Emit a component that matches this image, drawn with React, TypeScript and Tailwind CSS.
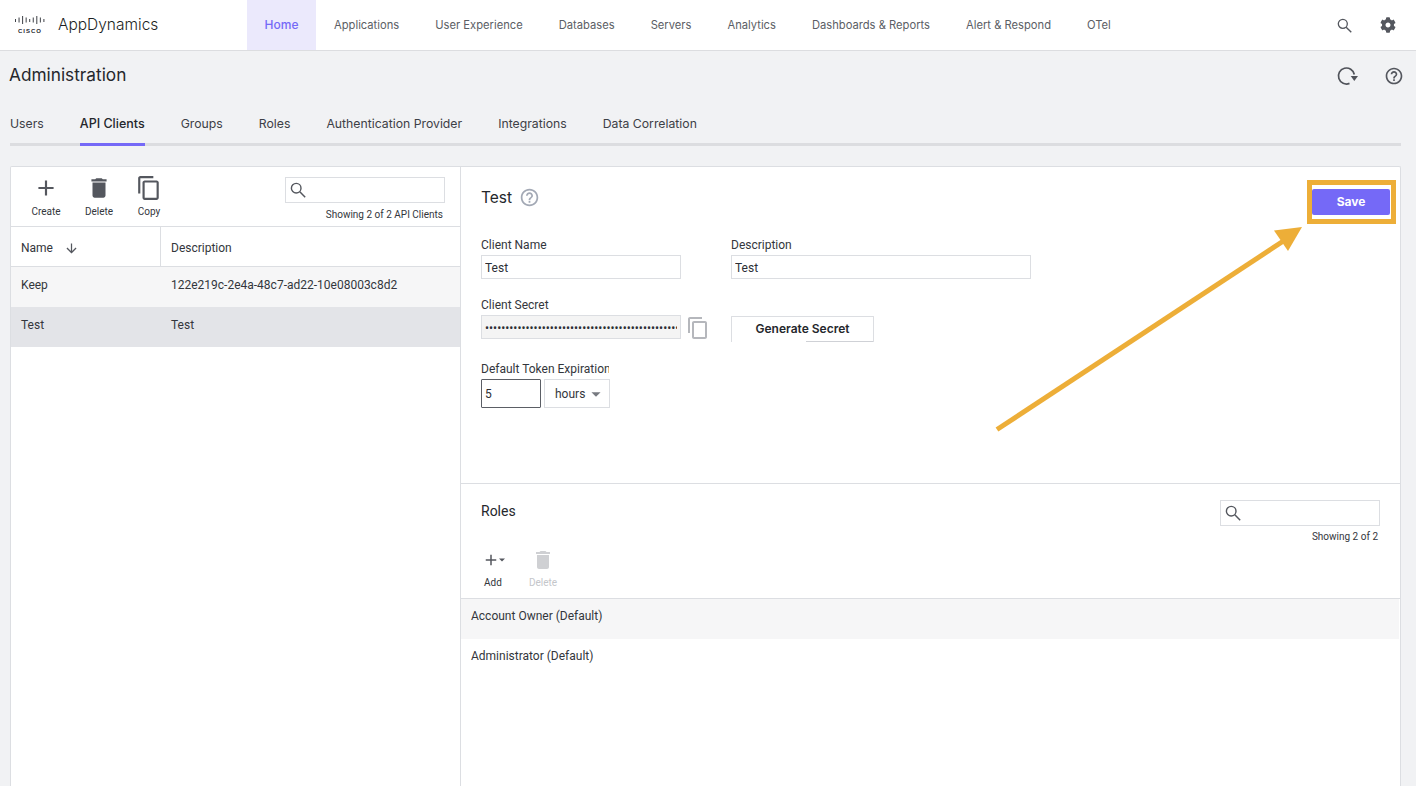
import React from "react";
import { MdAdd, MdContentCopy, MdDelete, MdArrowDownward, MdHelpOutline, MdArrowDropDown } from "react-icons/md";
import { FaCog } from "react-icons/fa";

const nav = ["Applications", "User Experience", "Databases", "Servers", "Analytics", "Dashboards & Reports", "Alert & Respond", "OTel"];
const tabs = ["Users", "API Clients", "Groups", "Roles", "Authentication Provider", "Integrations", "Data Correlation"];

function CiscoLogo() {
  const heights = [3, 5, 8, 5, 3, 5, 8, 5, 3];
  return (
    <svg width="32" height="18" viewBox="0 0 32 18" className="block">
      {heights.map((h, i) => (
        <rect key={i} x={1 + i * 3.55} y={i === 2 || i === 6 ? 0 : i % 2 ? 1.5 : 3} width="1" height={h} fill="#3f4248" />
      ))}
      <text x="16" y="16.5" textAnchor="middle" fontSize="6" fontWeight="700" letterSpacing="1" fill="#25272c" fontFamily="Liberation Sans, sans-serif">CISCO</text>
    </svg>
  );
}

function RefreshIcon() {
  return (
    <svg width="24" height="24" viewBox="0 0 24 24" fill="none" className="block">
      <path d="M13.5 19.4A8 8 0 1 1 18.3 10.5" stroke="#50535a" strokeWidth="1.7" />
      <path d="M14.7 12H22L18.3 17Z" fill="#50535a" />
    </svg>
  );
}

function Magnifier({ size = 16 }: { size?: number }) {
  return (
    <svg width={size} height={size} viewBox="0 0 16 16" fill="none" className="block">
      <circle cx="6.2" cy="6.2" r="4.8" stroke="#54575e" strokeWidth="1.4" />
      <path d="M9.8 9.8L15.2 15.2" stroke="#54575e" strokeWidth="1.5" />
    </svg>
  );
}

function ToolButton({ label, children, disabled, w, tight }: { label: string; children: React.ReactNode; disabled?: boolean; w: string; tight?: boolean }) {
  return (
    <div className={`flex flex-col items-center ${w}`}>
      <div className={`flex h-[24px] items-center justify-center ${disabled ? "text-[#cfd0d3]" : "text-[#54575e]"}`}>{children}</div>
      <span className={`${tight ? "mt-[4px]" : "mt-[5px]"} text-[10px] leading-[14px] ${disabled ? "text-[#c4c6ca]" : "text-[#33363c]"}`}>{label}</span>
    </div>
  );
}

function SearchBox({ cls }: { cls: string }) {
  return (
    <div className={`flex items-center border border-[#dcdee2] bg-white pl-[4px] ${cls}`}>
      <Magnifier />
    </div>
  );
}

const inputCls = "block h-[24px] border border-[#dcdee2] px-[3px] pt-[1px] text-[12px] text-[#2c2f35] outline-none";

export default function App() {
  return (
    <div className="relative flex h-[786px] w-[1416px] flex-col overflow-hidden bg-[#f1f2f4] font-['Inter',sans-serif] text-[#2c2f35]">
      <header className="flex h-[51px] shrink-0 items-stretch border-b border-[#dcdde0] bg-white">
        <div className="flex w-[247px] items-center pl-[14px]">
          <CiscoLogo />
          <span className="ml-[12px] text-[15.5px] font-light leading-none text-[#1d1f24]">AppDynamics</span>
        </div>
        <nav className="flex items-stretch text-[11.2px] text-[#5b5e65]">
          <div className="flex w-[69px] items-center justify-center bg-[#ebe9fc] text-[12px] font-medium text-[#7569f7]">Home</div>
          {nav.map((n) => (
            <div key={n} className="flex items-center px-[18px]">{n}</div>
          ))}
        </nav>
        <div className="ml-auto flex items-center gap-[28px] pr-[20px] text-[#54575e]">
          <Magnifier size={15} />
          <FaCog size={16} />
        </div>
      </header>

      <div className="flex h-[49px] shrink-0 items-center pl-[9px] pr-[12px]">
        <h1 className="mt-[-2px] text-[17.25px] font-normal leading-none text-[#25272c]">Administration</h1>
        <div className="ml-auto flex items-center gap-[24px] text-[#54575e]">
          <RefreshIcon />
          <MdHelpOutline size={20} />
        </div>
      </div>

      <div className="ml-[10px] mr-[15px] flex h-[46px] shrink-0 gap-[36px] border-b-[3px] border-[#dcdde0] pt-[6px] text-[12.25px] text-[#3d4046]">
        {tabs.map((t) => (
          <div key={t} className={`relative flex items-center ${t === "API Clients" ? "text-[12.5px] font-medium text-[#25272c]" : ""}`}>
            {t}
            {t === "API Clients" && <span className="absolute inset-x-0 bottom-[-3px] h-[3px] bg-[#7569f7]" />}
          </div>
        ))}
      </div>

      <main className="ml-[10px] mr-[15px] mt-[20px] flex min-h-0 flex-1 rounded-t-[2px] border border-b-0 border-[#dcdee2] bg-white font-['Roboto',sans-serif] text-[12px]">
        <section className="w-[450px] shrink-0 border-r border-[#dcdee2]">
          <div className="flex h-[60px] border-b border-[#dcdee2] pt-[9px]">
            <div className="flex gap-[15px] pl-[15px]">
              <ToolButton label="Create" w="w-[40px]"><MdAdd size={26} /></ToolButton>
              <ToolButton label="Delete" w="w-[36px]"><MdDelete size={26} /></ToolButton>
              <ToolButton label="Copy" w="w-[34px]"><MdContentCopy size={26} /></ToolButton>
            </div>
            <div className="ml-auto flex flex-col items-end pr-[15px] pt-[1px]">
              <SearchBox cls="h-[26px] w-[160px]" />
              <span className="mr-[2px] mt-[5px] text-[10px] leading-[14px] text-[#33363c]">Showing 2 of 2 API Clients</span>
            </div>
          </div>
          <div className="flex h-[40px] border-b border-[#dcdee2] pt-[3px] text-[#33363c]">
            <div className="mt-[-3px] flex w-[150px] items-center border-r border-[#dcdee2] pl-[10px] pt-[3px]">
              Name
              <MdArrowDownward size={15} className="ml-[11px] text-[#54575e]" />
            </div>
            <div className="flex items-center pl-[10px]">Description</div>
          </div>
          <div className="flex h-[40px] bg-[#f6f6f7] pt-[9px] text-[#33363c]">
            <div className="w-[150px] pl-[10px]">Keep</div>
            <div className="pl-[10px]">122e219c-2e4a-48c7-ad22-10e08003c8d2</div>
          </div>
          <div className="flex h-[40px] bg-[#e3e4e8] pt-[9px] text-[#33363c]">
            <div className="w-[150px] pl-[10px]">Test</div>
            <div className="pl-[10px]">Test</div>
          </div>
        </section>

        <section className="flex min-w-0 flex-1 flex-col">
          <div className="h-[317px] shrink-0 border-b border-[#dcdee2] px-[20px] pt-[20px]">
            <div className="flex items-start">
              <h2 className="flex items-center font-['Inter',sans-serif] text-[15.5px] font-normal leading-[18px] text-[#25272c]">
                Test
                <MdHelpOutline size={21} className="ml-[7px] text-[#a3a9b5]" />
              </h2>
              <button className="ml-auto mr-[-10px] mt-[2px] h-[26px] w-[78px] rounded-[2px] bg-[#7569f7] font-['Inter',sans-serif] text-[12px] font-bold text-white">Save</button>
            </div>
            <div className="mt-[22px] flex gap-[50px]">
              <label className="block w-[200px]">
                <span className="block leading-[16px] text-[#33363c]">Client Name</span>
                <input readOnly value="Test" className={`${inputCls} mt-[2px] w-[200px] bg-white`} />
              </label>
              <label className="block w-[300px]">
                <span className="block leading-[16px] text-[#33363c]">Description</span>
                <input readOnly value="Test" className={`${inputCls} mt-[2px] w-[300px] bg-white`} />
              </label>
            </div>
            <div className="mt-[18px] flex gap-[50px]">
              <div className="w-[200px]">
                <span className="block leading-[16px] text-[#33363c]">Client Secret</span>
                <div className="relative mt-[2px]">
                  <input readOnly type="password" value="000000000000000000000000000000000000000000000000000" className={`${inputCls} w-[200px] bg-[#f4f4f4] text-[9px]`} />
                  <MdContentCopy size={24} className="absolute left-[205px] top-[1px] text-[#b5b7bc]" />
                </div>
              </div>
              <div className="pt-[19px]">
                <button className="relative block h-[26px] w-[143px] rounded-t-[1px] border border-b-0 border-[#dcdee2] bg-white pb-[2px] text-center font-['Inter',sans-serif] text-[12px] font-semibold text-[#25272c]">
                  Generate Secret
                  <span className="absolute bottom-0 right-0 h-px w-[67px] bg-[#cfd1d6]" />
                </button>
              </div>
            </div>
            <div className="mt-[19px]">
              <span className="block w-[128px] overflow-hidden whitespace-nowrap leading-[16px] text-[#33363c]">Default Token Expiration</span>
              <div className="mt-[2px] flex gap-[3px]">
                <input readOnly value="5" className="block h-[29px] w-[60px] rounded-[1px] border border-[#5b5e65] bg-white px-[3px] text-[12px] outline-none" />
                <div className="flex h-[29px] w-[66px] items-center border border-[#dcdee2] pl-[10px] text-[#33363c]">
                  hours
                  <MdArrowDropDown size={22} className="text-[#777a80]" />
                </div>
              </div>
            </div>
          </div>

          <div className="flex h-[115px] shrink-0 flex-col border-b border-[#dcdee2] pt-[16px]">
            <div className="flex items-start px-[20px]">
              <h3 className="mt-[3px] text-[14px] font-normal leading-[16px] text-[#25272c]">Roles</h3>
              <div className="ml-auto flex flex-col items-end">
                <SearchBox cls="h-[26px] w-[160px]" />
                <span className="mr-[2px] mt-[4px] text-[10px] leading-[14px] text-[#33363c]">Showing 2 of 2</span>
              </div>
            </div>
            <div className="ml-[20px] mt-[4px] flex gap-[24px]">
              <ToolButton label="Add" w="w-[24px]" tight>
                <span className="flex items-center">
                  <MdAdd size={18} />
                  <svg width="6" height="4" viewBox="0 0 6 4" className="ml-[-1px]"><path d="M0 0.5h6L3 3.5z" fill="#54575e" /></svg>
                </span>
              </ToolButton>
              <ToolButton label="Delete" disabled w="w-[28px]" tight><MdDelete size={24} /></ToolButton>
            </div>
          </div>
          <div className="mr-[1px] flex h-[40px] shrink-0 bg-[#f6f6f7] pl-[10px] pt-[8px] text-[#33363c]">Account Owner (Default)</div>
          <div className="flex h-[40px] shrink-0 pl-[10px] pt-[8px] text-[#33363c]">Administrator (Default)</div>
        </section>
      </main>

      <div className="absolute left-[1307px] top-[180px] h-[44px] w-[89px] border-[5px] border-[#edae38]" />
      <svg className="pointer-events-none absolute left-0 top-0" width="1416" height="786" viewBox="0 0 1416 786" fill="none">
        <path d="M997 429.5L1288 238" stroke="#edae38" strokeWidth="5" />
        <path d="M1302 227L1274 230.5L1288 251Z" fill="#edae38" />
      </svg>
    </div>
  );
}
